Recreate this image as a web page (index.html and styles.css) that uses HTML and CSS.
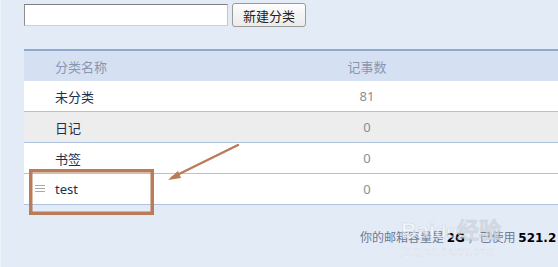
FILE: index.html
```html
<!DOCTYPE html>
<html lang="zh-CN">
<head>
<meta charset="utf-8">
<title>分类管理</title>
<link rel="stylesheet" href="styles.css">
</head>
<body>
<div class="page">
  <div class="toolbar">
    <input class="name-input" type="text">
    <button class="btn">新建分类</button>
  </div>
  <div class="table">
    <div class="row head">
      <div class="c-name">分类名称</div>
      <div class="c-count">记事数</div>
    </div>
    <div class="row">
      <div class="c-name">未分类</div>
      <div class="c-count">81</div>
    </div>
    <div class="row alt">
      <div class="c-name">日记</div>
      <div class="c-count">0</div>
    </div>
    <div class="row">
      <div class="c-name">书签</div>
      <div class="c-count">0</div>
    </div>
    <div class="row">
      <div class="c-name"><span class="handle"><i></i><i></i><i></i></span>test</div>
      <div class="c-count">0</div>
    </div>
  </div>
  <div class="footer">你的邮箱容量是 <b>2G</b> ，已使用 <b>521.2</b></div>

  <div class="watermark">
    <span class="wm-main">Bai<span class="wm-du">du</span>经验</span>
    <span class="wm-sub">jingyan.baidu.com</span>
  </div>

  <svg class="annot" width="558" height="267" viewBox="0 0 558 267">
    <rect x="30.75" y="170.75" width="121.5" height="42.5" fill="none" stroke="#b97b58" stroke-width="3.5"/>
    <line x1="238" y1="145" x2="172" y2="177.5" stroke="#b97b58" stroke-width="2.5" stroke-linecap="round"/>
    <path d="M168 180 L178 171 L181 178 Z" fill="#b97b58"/>
  </svg>
</div>
</body>
</html>
```

FILE: styles.css
```css
html, body {
  margin: 0;
  padding: 0;
  width: 558px;
  height: 267px;
  overflow: hidden;
  background: #e3ebf6;
}

.page {
  position: relative;
  width: 558px;
  height: 267px;
  overflow: hidden;
  border-left: 1px solid #eef3fa;
  padding-left: 23px;
  padding-top: 3px;
  box-sizing: border-box;
  font-family: "Noto Sans", "Noto Sans CJK SC", sans-serif;
  font-size: 13px;
}

.toolbar {
  display: flex;
  align-items: center;
  gap: 4px;
  height: 24px;
}

.name-input {
  box-sizing: border-box;
  width: 204px;
  height: 22px;
  margin: 0;
  padding: 0 3px;
  background: #fff;
  border: 1px solid #a7a7a7;
  border-top-color: #7f7f7f;
  border-left-color: #8c8c8c;
  border-bottom-color: #cfcfcf;
  border-right-color: #c4c4c4;
}

.btn {
  box-sizing: border-box;
  width: 74px;
  height: 24px;
  margin: 0;
  padding: 0;
  border: 1px solid #9a9a9a;
  border-radius: 3px;
  background: linear-gradient(#fdfdfd, #ebebeb);
  font-family: "Noto Sans CJK SC", sans-serif;
  font-size: 13px;
  color: #222;
}

.table {
  margin-top: 22px;
  width: 560px;
  border-top: 2px solid #8eaad1;
}

.row {
  display: flex;
  height: 30px;
  align-items: center;
  background: #fff;
  border-bottom: 1px solid #aec3e1;
  color: #1c2f52;
}

.row.alt {
  background: #ededed;
}

.row.head {
  background: #d5e1f2;
  border-bottom: none;
  color: #8a96b0;
}

.c-name {
  position: relative;
  width: 283px;
  padding-left: 31px;
  box-sizing: border-box;
  font-family: "Noto Sans", "Noto Sans CJK SC", sans-serif;
}

.c-count {
  width: 120px;
  text-align: center;
  color: #8e8e8e;
}

.head .c-count {
  color: #8a96b0;
}

.handle {
  position: absolute;
  left: 11px;
  top: 50%;
  margin-top: -4px;
  display: flex;
  flex-direction: column;
  gap: 2px;
}

.handle i {
  display: block;
  width: 10px;
  height: 1px;
  background: #a9a9a9;
}

.footer {
  margin-top: 23px;
  padding-left: 336px;
  white-space: nowrap;
  font-family: "Noto Sans CJK SC", sans-serif;
  font-size: 12px;
  color: #6f7a93;
}

.footer b {
  font-family: "DejaVu Sans", sans-serif;
  font-weight: bold;
  color: #000;
}

.watermark {
  position: absolute;
  left: 400px;
  top: 218px;
  display: flex;
  flex-direction: column;
  align-items: flex-start;
  pointer-events: none;
  color: rgba(255, 255, 255, 0.55);
  font-family: "Liberation Sans", sans-serif;
}

.wm-main {
  font-size: 22px;
  font-weight: bold;
  line-height: 26px;
  -webkit-text-stroke: 0.6px rgba(170, 180, 195, 0.45);
}

.wm-main .wm-du {
  font-size: 18px;
}

.wm-sub {
  font-size: 11px;
  line-height: 12px;
  letter-spacing: 0.3px;
  -webkit-text-stroke: 0.3px rgba(170, 180, 195, 0.4);
}

.annot {
  position: absolute;
  left: -1px;
  top: 0;
  pointer-events: none;
}
```
